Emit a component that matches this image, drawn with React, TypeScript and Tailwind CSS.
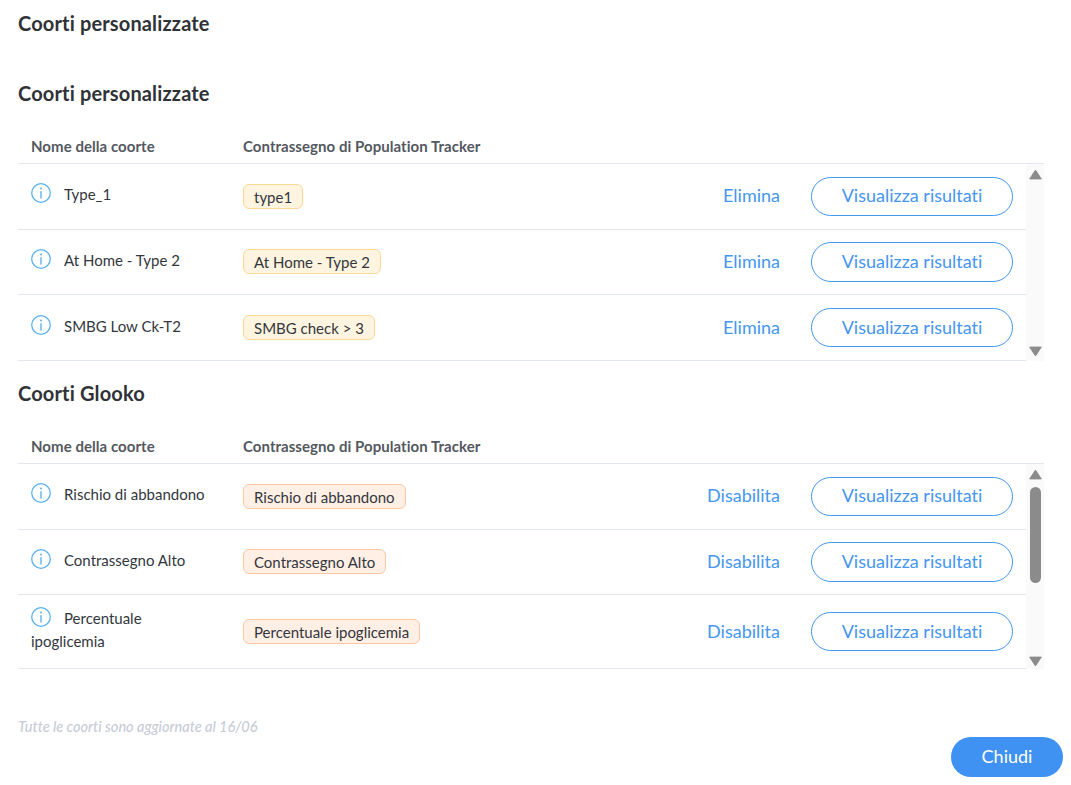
const customRows = [
  { name: "Type_1", badge: "type1", height: "h-[65.67px]" },
  { name: "At Home - Type 2", badge: "At Home - Type 2", height: "h-[65.67px]" },
  { name: "SMBG Low Ck-T2", badge: "SMBG check > 3", height: "h-[65.67px]" },
];

const glookoRows = [
  { name: "Rischio di abbandono", badge: "Rischio di abbandono", height: "h-[65.67px]" },
  { name: "Contrassegno Alto", badge: "Contrassegno Alto", height: "h-[65.67px]" },
  { name: "Percentuale ipoglicemia", badge: "Percentuale ipoglicemia", height: "h-[73.67px]" },
];

type Row = { name: string; badge: string; height: string };

function InfoIcon() {
  return (
    <svg viewBox="0 0 20 20" className="mr-[13px] inline-block h-[20px] w-[20px] align-[-3px]" fill="none">
      <circle cx="10" cy="10" r="9.3" stroke="#5cb2f0" strokeWidth="1.3" />
      <circle cx="10" cy="5.4" r="1" fill="#5cb2f0" />
      <path d="M10 8.2v7.2" stroke="#5cb2f0" strokeWidth="1.4" />
    </svg>
  );
}

function Arrow({ down }: { down?: boolean }) {
  return (
    <svg viewBox="0 0 13 10" className="h-[10px] w-[13px] shrink-0">
      <path d={down ? "M0.6 1h11.8L7 9.4H6z" : "M0.6 9h11.8L7 0.6H6z"} fill="#8b8b8b" stroke="#8b8b8b" strokeWidth="0.8" strokeLinejoin="round" />
    </svg>
  );
}

function CohortTable({
  rows,
  action,
  badgeClass,
  barClass,
  thumb,
}: {
  rows: Row[];
  action: string;
  badgeClass: string;
  barClass: string;
  thumb?: boolean;
}) {
  return (
    <div>
      <div className="flex border-b border-[#e3e7ee] pt-[31px] pb-[8px] text-[15px] leading-[18px] font-bold tracking-[0.05px] text-[#54585f]">
        <div className="w-[225px] pl-[13px]">Nome della coorte</div>
        <div>Contrassegno di Population Tracker</div>
      </div>
      <div className="flex">
        <div className="min-w-0 flex-1">
          {rows.map((row) => (
            <div key={row.name} className={`flex items-center border-b border-[#e3e7ee] ${row.height}`}>
              <div className="w-[225px] shrink-0 pr-[28px] pb-[3px] pl-[13px] text-[15px] leading-[23px] text-[#33373d]">
                <InfoIcon />
                {row.name}
              </div>
              <span className={`rounded-[6px] border px-[10px] pt-[1px] text-[15px] leading-[22px] text-[#33373d] ${badgeClass}`}>
                {row.badge}
              </span>
              <span className="ml-auto pb-[1px] text-[18px] text-[#4596f1]">{action}</span>
              <button
                type="button"
                className="mr-[13px] ml-[31px] h-[39.5px] w-[202px] rounded-full border border-[#4596f1] bg-white pb-[1px] text-[18px] text-[#4596f1]"
              >
                Visualizza risultati
              </button>
            </div>
          ))}
        </div>
        <div className={`flex w-[18px] shrink-0 flex-col items-center bg-[#fafafa] pt-[6px] ${barClass}`}>
          <Arrow />
          {thumb && <div className="mt-[7px] h-[96px] w-[11px] rounded-full bg-[#8b8b8b]" />}
          <div className="flex-1" />
          <Arrow down />
        </div>
      </div>
    </div>
  );
}

export default function App() {
  return (
    <div className="h-[785px] w-[1071px] overflow-hidden bg-white pl-[18px] font-['Lato',sans-serif] [font-variant-ligatures:none]">
      <div className="w-[1026px]">
        <h1 className="pt-[11px] pb-[1px] text-[20px] leading-[24px] font-bold tracking-[0.15px] text-[#2f3237]">Coorti personalizzate</h1>
        <h2 className="pt-[45px] pb-[1px] text-[20px] leading-[24px] font-bold tracking-[0.15px] text-[#2f3237]">Coorti personalizzate</h2>
        <CohortTable rows={customRows} action="Elimina" badgeClass="border-[#fcd991] bg-[#fff4df]" barClass="pb-[5px]" />
        <h2 className="pt-[20px] pb-[1px] text-[20px] leading-[24px] font-bold tracking-[0.15px] text-[#2f3237]">Coorti Glooko</h2>
        <CohortTable rows={glookoRows} action="Disabilita" badgeClass="border-[#fdc8a1] bg-[#ffefe5]" barClass="pb-[3px]" thumb />
      </div>
      <div className="flex items-start justify-between pr-[8px]">
        <p className="pt-[48px] text-[14.5px] leading-[20px] font-medium text-[#c6ccd8] italic">Tutte le coorti sono aggiornate al 16/06</p>
        <button type="button" className="mt-[68px] h-[40px] w-[112px] rounded-full bg-[#3f92f2] text-[18px] text-white">
          Chiudi
        </button>
      </div>
    </div>
  );
}
